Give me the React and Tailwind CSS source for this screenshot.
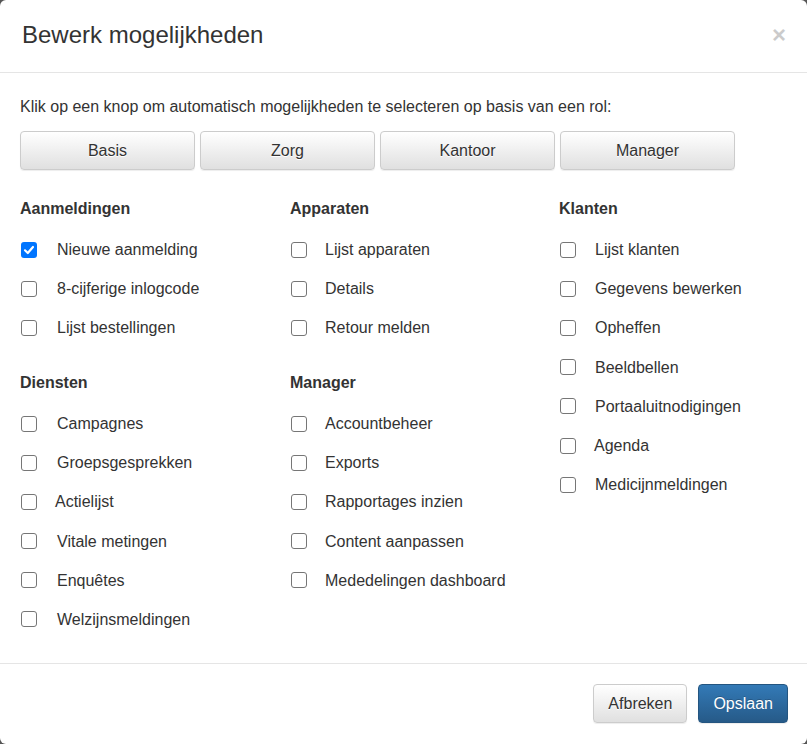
import React from "react";

const roleButtons = ["Basis", "Zorg", "Kantoor", "Manager"];

// gap between checkbox and label differs a little per column in the original
const labelGap = ["ml-[20px]", "ml-[18px]", "ml-[19px]"];
const tightGap = ["ml-[18px]", "ml-[16px]", "ml-[18px]"];

const columns = [
  [
    {
      title: "Aanmeldingen",
      items: [
        { label: "Nieuwe aanmelding", checked: true },
        { label: "8-cijferige inlogcode" },
        { label: "Lijst bestellingen" },
      ],
    },
    {
      title: "Diensten",
      items: [
        { label: "Campagnes" },
        { label: "Groepsgesprekken" },
        { label: "Actielijst", tight: true },
        { label: "Vitale metingen" },
        { label: "Enquêtes" },
        { label: "Welzijnsmeldingen" },
      ],
    },
  ],
  [
    {
      title: "Apparaten",
      items: [
        { label: "Lijst apparaten" },
        { label: "Details" },
        { label: "Retour melden" },
      ],
    },
    {
      title: "Manager",
      items: [
        { label: "Accountbeheer" },
        { label: "Exports" },
        { label: "Rapportages inzien" },
        { label: "Content aanpassen" },
        { label: "Mededelingen dashboard" },
      ],
    },
  ],
  [
    {
      title: "Klanten",
      items: [
        { label: "Lijst klanten" },
        { label: "Gegevens bewerken" },
        { label: "Opheffen" },
        { label: "Beeldbellen" },
        { label: "Portaaluitnodigingen" },
        { label: "Agenda", tight: true },
        { label: "Medicijnmeldingen" },
      ],
    },
  ],
];

function Checkbox({ checked }) {
  if (checked) {
    return (
      <span className="w-4 h-4 rounded-[3px] bg-[#0075ff] flex items-center justify-center shrink-0">
        <svg width="12" height="12" viewBox="0 0 12 12" fill="none">
          <path d="M2 6.3 L4.8 9 L10 3" stroke="white" strokeWidth="2.2" strokeLinecap="round" strokeLinejoin="round" />
        </svg>
      </span>
    );
  }
  return <span className="block w-4 h-4 rounded-[3px] border border-[#767676] bg-white shrink-0" />;
}

function Section({ title, items, first, col }) {
  return (
    <div className={first ? "" : "mt-[24.4px]"}>
      <h4 className="h-[22px] leading-[22px] font-bold text-[16px] text-[#333] mb-[10px]">{title}</h4>
      {items.map((it) => (
        <label key={it.label} className="h-[39.2px] flex items-center cursor-pointer">
          <span className="ml-[1px] shrink-0">
            <Checkbox checked={it.checked} />
          </span>
          <span className={`${it.tight ? tightGap[col] : labelGap[col]} text-[16px] text-[#333] pt-[1px]`}>{it.label}</span>
        </label>
      ))}
    </div>
  );
}

export default function App() {
  return (
    <div className="w-[807px] h-[744px] bg-[#555] font-['Liberation_Sans',Arial,sans-serif]">
      <div className="w-full h-full bg-white rounded-[6px] flex flex-col overflow-hidden">
        {/* header */}
        <div className="h-[73px] shrink-0 border-b border-[#e5e5e5] flex items-center justify-between pl-[22px] pr-[20px] pb-[3px]">
          <h3 className="text-[24px] leading-[26px] text-[#333]">Bewerk mogelijkheden</h3>
          <button className="text-[24px] font-bold leading-none text-black opacity-20 mr-[1px]">×</button>
        </div>

        {/* body */}
        <div className="flex-1 px-[20px] pt-[23px]">
          <p className="text-[16px] leading-[22px] text-[#333] mb-[13px]">
            Klik op een knop om automatisch mogelijkheden te selecteren op basis van een rol:
          </p>
          <div className="flex gap-[5px]">
            {roleButtons.map((b) => (
              <button
                key={b}
                className="w-[175px] h-[39px] rounded-[4px] border border-[#ccc] bg-linear-to-b from-white to-[#e0e0e0] text-[16px] text-[#333] shadow-[0_1px_1px_rgba(0,0,0,0.075)] [text-shadow:0_1px_0_#fff]"
              >
                {b}
              </button>
            ))}
          </div>
          <div className="grid grid-cols-[270px_269px_1fr] mt-[28px]">
            {columns.map((col, ci) => (
              <div key={ci}>
                {col.map((s, si) => (
                  <Section key={s.title} title={s.title} items={s.items} first={si === 0} col={ci} />
                ))}
              </div>
            ))}
          </div>
        </div>

        {/* footer */}
        <div className="h-[81px] shrink-0 border-t border-[#e5e5e5] flex items-start justify-end pt-[20px] pr-[19px] gap-[11px]">
          <button className="h-[39px] px-[14px] rounded-[4px] border border-[#ccc] bg-linear-to-b from-white to-[#e0e0e0] text-[16px] text-[#333] shadow-[0_1px_1px_rgba(0,0,0,0.075)] [text-shadow:0_1px_0_#fff]">
            Afbreken
          </button>
          <button className="h-[39px] px-[14px] rounded-[4px] border border-[#245580] bg-linear-to-b from-[#337ab7] to-[#265a88] text-[16px] text-white shadow-[0_1px_1px_rgba(0,0,0,0.075)] [text-shadow:0_-1px_0_rgba(0,0,0,0.2)]">
            Opslaan
          </button>
        </div>
      </div>
    </div>
  );
}
